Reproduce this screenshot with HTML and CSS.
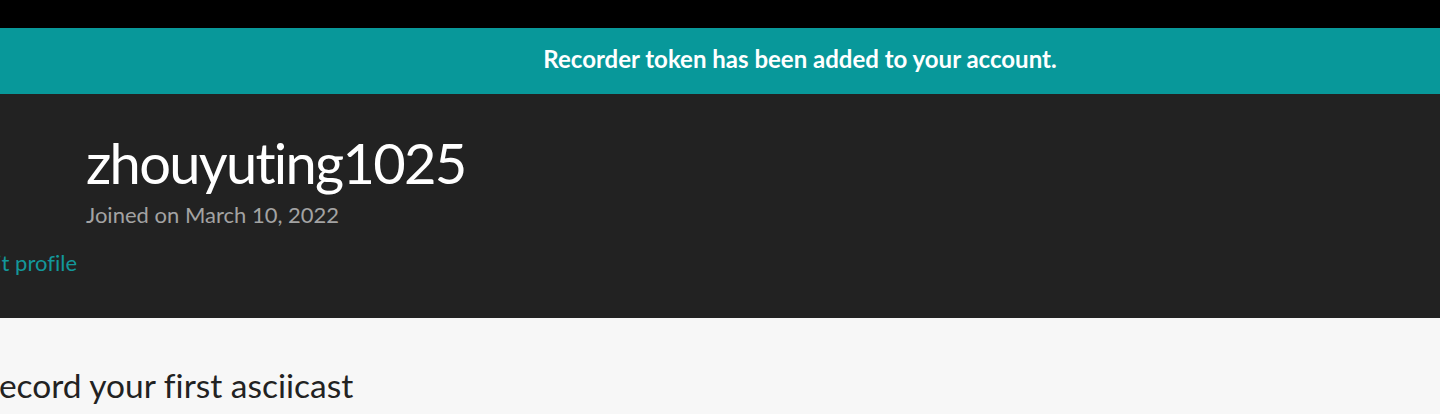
FILE: index.html
```html
<!DOCTYPE html>
<html lang="en">
<head>
<meta charset="utf-8">
<title>zhouyuting1025 - asciinema</title>
<link rel="stylesheet" href="styles.css">
</head>
<body>
<div class="page">
  <div class="topbar"></div>
  <div class="flash">Recorder token has been added to your account.</div>
  <section class="profile">
    <div class="profile-side">
      <a class="edit-link" href="#">Edit profile</a>
    </div>
    <div class="profile-main">
      <h1 class="username">zhouyuting1025</h1>
      <p class="joined">Joined on March 10, 2022</p>
    </div>
  </section>
  <section class="content">
    <h2 class="section-title">Record your first asciicast</h2>
  </section>
</div>
</body>
</html>
```
FILE: styles.css
```css
html, body {
  margin: 0;
  padding: 0;
  overflow: hidden;
  background: #f7f7f7;
}
body {
  font-family: Lato, "Open Sans", sans-serif;
  font-variant-ligatures: none;
}
.page {
  width: 1840px;
  margin-left: -120px;
}
.topbar {
  height: 28px;
  background: #000;
}
.flash {
  height: 66px;
  background: #08989a;
  color: #fff;
  font-weight: 700;
  font-size: 24px;
  line-height: 62px;
  text-align: center;
}
.profile {
  height: 224px;
  background: #222;
  display: flex;
  box-sizing: border-box;
  padding-top: 36px;
}
.profile-side {
  width: 197px;
  display: flex;
  justify-content: flex-end;
  align-items: flex-start;
  padding-top: 119px;
  box-sizing: border-box;
}
.edit-link {
  color: #13979a;
  text-decoration: none;
  font-size: 22px;
  line-height: 28px;
}
.profile-main {
  padding-left: 9px;
}
.username {
  margin: 0;
  font-weight: 400;
  font-size: 56px;
  line-height: 66px;
  letter-spacing: -1.7px;
  color: #fff;
}
.joined {
  margin: 5px 0 0;
  font-size: 22px;
  line-height: 28px;
  color: #a3a3a3;
}
.content {
  padding: 45px 0 0 99px;
}
.section-title {
  margin: 0;
  font-weight: 400;
  font-size: 33.5px;
  line-height: 44px;
  color: #222;
}
```
